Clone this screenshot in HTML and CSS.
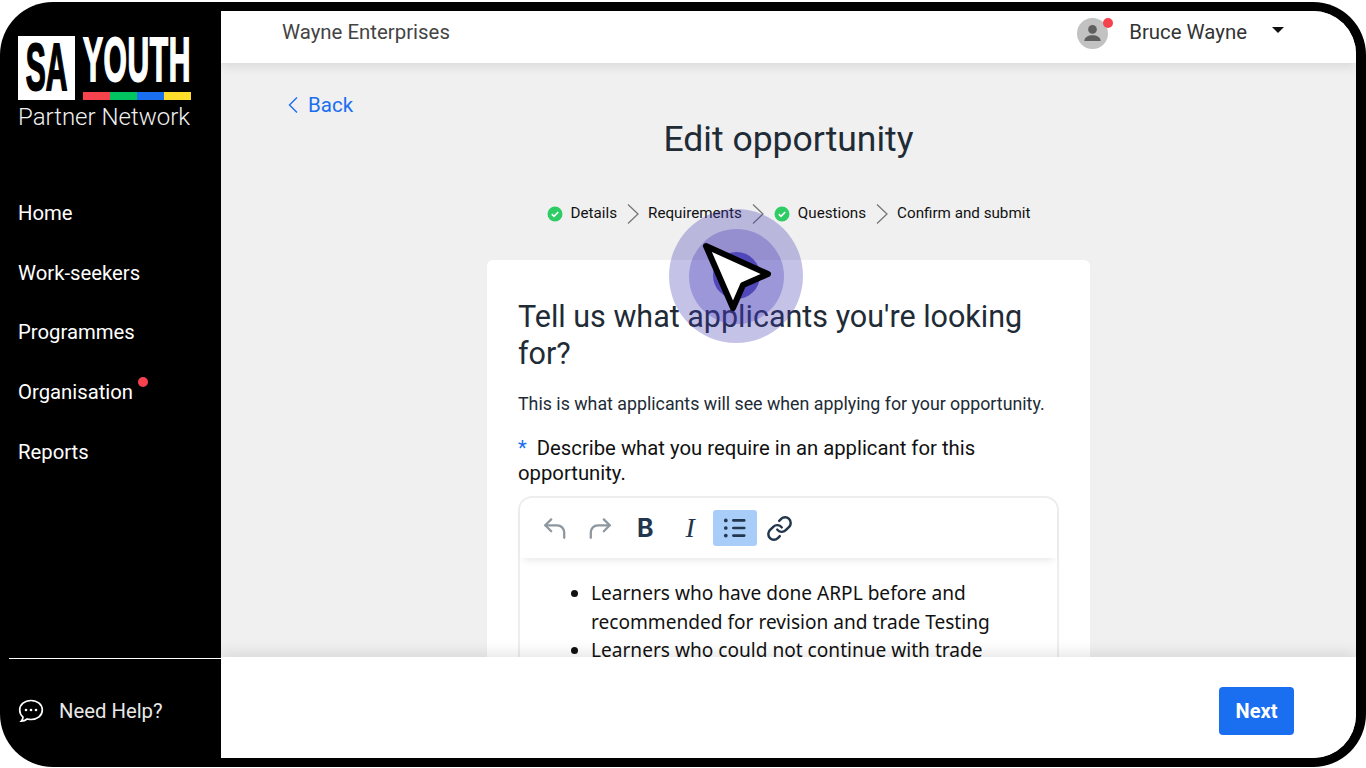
FILE: index.html
```html
<!DOCTYPE html>
<html lang="en">

<head>
    <meta charset="UTF-8">
    <meta name="viewport" content="width=device-width, initial-scale=1.0">
    <title>Edit opportunity</title>
    <link rel="stylesheet" href="styles.css">
</head>

<body>
    <div class="frame">
        <aside class="sidebar">
            <div class="logo">
                <div class="logo-top">
                    <div class="logo-sa"><span>SA</span></div>
                    <div class="logo-right">
                        <div class="logo-youth"><span>YOUTH</span></div>
                        <div class="logo-stripes">
                            <i class="red"></i><i class="green"></i><i class="blue"></i><i class="yellow"></i>
                        </div>
                    </div>
                </div>
                <div class="logo-sub">Partner Network</div>
            </div>
            <nav class="nav">
                <a>Home</a>
                <a>Work-seekers</a>
                <a>Programmes</a>
                <a>Organisation<b class="dot"></b></a>
                <a>Reports</a>
            </nav>
            <div class="help">
                <svg width="28" height="24" viewBox="0 0 26 24" fill="none" stroke="#fff" stroke-width="1.7">
                    <path d="M13 1.500c6.400 0 11.300 4 11.300 9.600s-4.900 9.400-11.300 9.400c-1.300 0-2.600-.2-3.800-.5-1.300 1.100-3.500 2.200-6 2.200 1-1.100 1.700-2.500 1.800-4.100C2.900 16.400 1.700 13.900 1.700 11.100 1.700 5.500 6.600 1.500 13 1.500z" />
                    <circle cx="8" cy="11" r="1.300" fill="#fff" stroke="none" />
                    <circle cx="13" cy="11" r="1.300" fill="#fff" stroke="none" />
                    <circle cx="18" cy="11" r="1.300" fill="#fff" stroke="none" />
                </svg>
                <span>Need Help?</span>
            </div>
        </aside>

        <div class="main">
            <header class="topbar">
                <div class="company">Wayne Enterprises</div>
                <div class="user">
                    <div class="avatar">
                        <svg width="21" height="21" viewBox="0 0 18 18" fill="#5f5f5f">
                            <circle cx="9" cy="5.500" r="3.700" />
                            <path d="M2 15.500c0-3.400 3.400-5 7-5s7 1.600 7 5z" />
                        </svg>
                        <b class="dot"></b>
                    </div>
                    <span class="user-name">Bruce Wayne</span>
                    <i class="caret"></i>
                </div>
            </header>

            <main class="content">
                <a class="back">
                    <svg width="12" height="18" viewBox="0 0 12 18" fill="none" stroke="#1a6ef0" stroke-width="1.400">
                        <path d="M10 1.500 2.500 9l7.500 7.500" />
                    </svg>
                    Back
                </a>
                <h1 class="title">Edit opportunity</h1>
                <div class="steps">
                    <svg class="check" width="16" height="16" viewBox="0 0 16 16">
                        <circle cx="8" cy="8" r="7.500" fill="#2ecc64" />
                        <path d="M4.800 8.200 7 10.300l4.200-4.300" fill="none" stroke="#fff" stroke-width="1.600" />
                    </svg>
                    <span class="step">Details</span>
                    <svg class="chev" width="14" height="22" viewBox="0 0 14 22" fill="none" stroke="#777" stroke-width="1.300">
                        <path d="M2 1.500 12 11 2 20.500" />
                    </svg>
                    <span class="step">Requirements</span>
                    <svg class="chev" width="14" height="22" viewBox="0 0 14 22" fill="none" stroke="#777" stroke-width="1.300">
                        <path d="M2 1.500 12 11 2 20.500" />
                    </svg>
                    <svg class="check" width="16" height="16" viewBox="0 0 16 16">
                        <circle cx="8" cy="8" r="7.500" fill="#2ecc64" />
                        <path d="M4.800 8.200 7 10.300l4.200-4.300" fill="none" stroke="#fff" stroke-width="1.600" />
                    </svg>
                    <span class="step">Questions</span>
                    <svg class="chev" width="14" height="22" viewBox="0 0 14 22" fill="none" stroke="#777" stroke-width="1.300">
                        <path d="M2 1.500 12 11 2 20.500" />
                    </svg>
                    <span class="step">Confirm and submit</span>
                </div>

                <section class="card">
                    <h2>Tell us what applicants you're looking for?</h2>
                    <p class="hint">This is what applicants will see when applying for your opportunity.</p>
                    <label class="field-label"><span class="star">*</span>Describe what you require in an applicant for this opportunity.</label>
                    <div class="editor">
                        <div class="toolbar">
                            <button class="tool">
                                <svg width="26" height="26" viewBox="0 0 24 24" fill="none" stroke="#8d979f" stroke-width="2.100" stroke-linecap="round" stroke-linejoin="round">
                                    <path d="M8.500 4 3 9.500 8.500 15" />
                                    <path d="M3 9.500h11a6.500 6.500 0 0 1 6.500 6.500v5" />
                                </svg>
                            </button>
                            <button class="tool">
                                <svg width="26" height="26" viewBox="0 0 24 24" fill="none" stroke="#8d979f" stroke-width="2.100" stroke-linecap="round" stroke-linejoin="round">
                                    <path d="M15.500 4 21 9.500 15.500 15" />
                                    <path d="M21 9.500H10A6.500 6.500 0 0 0 3.500 16v5" />
                                </svg>
                            </button>
                            <button class="tool tool-b">B</button>
                            <button class="tool tool-i">I</button>
                            <button class="tool active">
                                <svg width="26" height="26" viewBox="0 0 24 24" fill="none" stroke="#22364d" stroke-width="2.500" stroke-linecap="round">
                                    <path d="M10.500 5h10M10.500 12h10M10.500 19h10" />
                                    <circle cx="3.500" cy="5" r="1.700" fill="#22364d" stroke="none" />
                                    <circle cx="3.500" cy="12" r="1.700" fill="#22364d" stroke="none" />
                                    <circle cx="3.500" cy="19" r="1.700" fill="#22364d" stroke="none" />
                                </svg>
                            </button>
                            <button class="tool">
                                <svg width="27" height="27" viewBox="0 0 24 24" fill="none" stroke="#22364d" stroke-width="2.200" stroke-linecap="round" stroke-linejoin="round">
                                    <path d="M10 13a5 5 0 0 0 7.540.54l3-3a5 5 0 0 0-7.070-7.070l-1.720 1.710" />
                                    <path d="M14 11a5 5 0 0 0-7.540-.54l-3 3a5 5 0 0 0 7.070 7.070l1.710-1.710" />
                                </svg>
                            </button>
                        </div>
                        <ul class="editor-body">
                            <li>Learners who have done ARPL before and recommended for revision and trade Testing</li>
                            <li>Learners who could not continue with trade testing due to funding</li>
                        </ul>
                    </div>
                </section>
            </main>

            <footer class="footer">
                <button class="next">Next</button>
            </footer>
        </div>

        <div class="pointer">
            <span class="ring ring-3"></span>
            <span class="ring ring-2"></span>
            <span class="ring ring-1"></span>
            <svg class="arrow" width="74" height="74" viewBox="0 0 74 74">
                <path d="M6 6 68 34 43 45 33 68z" fill="#fff" stroke="#000" stroke-width="6" stroke-linejoin="round" />
            </svg>
        </div>
    </div>
</body>

</html>
```

FILE: styles.css
```css
* {
    box-sizing: border-box;
}

html, body {
    margin: 0;
    padding: 0;
    background-color: #fff;
}

body {
    width: 1366px;
    height: 768px;
    overflow: hidden;
    font-family: Roboto, Arial, sans-serif;
}

.frame {
    position: relative;
    display: flex;
    width: 1366px;
    height: 765px;
    margin-top: 2px;
    padding: 9px 10px 9px 0;
    background-color: #000;
    border-radius: 53px;
    overflow: hidden;
}

/* sidebar */
.sidebar {
    display: flex;
    flex-direction: column;
    flex: 0 0 221px;
    margin-top: -9px;
    margin-bottom: -9px;
    color: #fff;
}

.logo {
    width: 172px;
    margin: 34px 0 0 18px;
}

.logo-top {
    display: flex;
    height: 64px;
}

.logo-sa {
    flex: 0 0 57px;
    height: 64px;
    background-color: #fff;
    color: #000;
    text-align: center;
}

.logo-sa span,
.logo-youth span {
    display: inline-block;
    font-family: "Liberation Sans", Arial, sans-serif;
    font-weight: 700;
    font-size: 30px;
    -webkit-text-stroke: 0.9px currentColor;
}

.logo-sa span {
    line-height: 64px;
    transform: scaleY(2.2);
}

.logo-right {
    flex: 0 0 107px;
    margin-left: 8px;
}

.logo-youth {
    height: 52px;
    white-space: nowrap;
}

.logo-youth span {
    letter-spacing: 0.6px;
    line-height: 48px;
    color: #fff;
    transform: scaleY(2.1);
}

.logo-stripes {
    display: flex;
    height: 8px;
    margin-top: 4px;
}

.logo-stripes i {
    flex: 1;
}

.red { background-color: #f5424c; }
.green { background-color: #00c45f; }
.blue { background-color: #1a6ef0; }
.yellow { background-color: #ffdd2b; }

.logo-sub {
    margin-top: 3px;
    font-size: 24px;
    font-weight: 300;
    line-height: 28px;
    white-space: nowrap;
    color: #f0f0f0;
}

.nav {
    display: flex;
    flex-direction: column;
    margin-top: 62px;
    padding-left: 18px;
}

.nav a {
    height: 59.700px;
    font-size: 20.300px;
    line-height: 40px;
}

.dot {
    display: inline-block;
    width: 10px;
    height: 10px;
    border-radius: 50%;
    background-color: #f5424c;
}

.nav .dot {
    position: relative;
    top: -12px;
    margin-left: 5px;
}

.help {
    display: flex;
    align-items: center;
    gap: 14px;
    margin: auto 0 0 9px;
    height: 109px;
    padding: 0 0 5px 8px;
    border-top: 1px solid #fff;
    font-size: 20.300px;
    color: #e8e8e8;
}

/* main column */
.main {
    display: flex;
    flex-direction: column;
    flex: 1;
    min-width: 0;
    background-color: #f0f0f0;
    border-radius: 0 43px 43px 0;
    overflow: hidden;
}

.topbar {
    display: flex;
    align-items: center;
    justify-content: space-between;
    flex: 0 0 52px;
    padding: 0 72px 10px 61px;
    background-color: #fff;
    box-shadow: 0 2px 12px rgba(0, 0, 0, 0.12);
    font-size: 20.400px;
    color: #444;
}

.user {
    display: flex;
    align-items: center;
}

.avatar {
    position: relative;
    display: flex;
    align-items: center;
    justify-content: center;
    width: 31px;
    height: 31px;
    margin-top: 2px;
    border-radius: 50%;
    background-color: #c2c2c2;
}

.avatar .dot {
    position: absolute;
    top: 0;
    right: -5px;
}

.user-name {
    margin-left: 21px;
    color: #333;
}

.caret {
    width: 0;
    height: 0;
    margin: -4px 0 0 25px;
    border-left: 6px solid transparent;
    border-right: 6px solid transparent;
    border-top: 6px solid #111;
}

.content {
    position: relative;
    flex: 1;
    min-height: 0;
    overflow: hidden;
    display: flex;
    flex-direction: column;
    align-items: center;
}

.back {
    align-self: flex-start;
    display: flex;
    align-items: center;
    gap: 9px;
    margin: 30px 0 0 66px;
    font-size: 20.500px;
    line-height: 24px;
    color: #1a6ef0;
}

.title {
    margin: -1px 0 0;
    font-size: 35.500px;
    font-weight: 400;
    line-height: 46px;
    color: #212b36;
}

.steps {
    display: flex;
    align-items: center;
    margin-top: 39px;
    font-size: 15.200px;
    color: #111;
}

.check {
    margin: 2px 8px 0 0;
}

.chev {
    margin: 2px 8px 0 9px;
}

.chev + .check {
    margin-left: 1px;
}

.card {
    width: 603px;
    flex: none;
    margin-top: 35px;
    padding: 38px 31px 0;
    background-color: #fff;
    border-radius: 6px;
    color: #212b36;
}

.card h2 {
    margin: 0;
    font-size: 30.500px;
    font-weight: 400;
    line-height: 37px;
}

.hint {
    margin: 20px 0 0;
    font-size: 17.800px;
    line-height: 24px;
}

.field-label {
    display: block;
    margin-top: 20px;
    font-size: 20.300px;
    line-height: 25px;
    color: #111;
}

.star {
    margin-right: 10px;
    color: #1a6ef0;
}

.editor {
    margin-top: 10px;
    border: 2px solid #eee;
    border-radius: 14px 14px 0 0;
}

.toolbar {
    display: flex;
    align-items: center;
    height: 60px;
    padding: 0 12px 0 13px;
    box-shadow: 0 6px 8px -4px rgba(0, 0, 0, 0.1);
}

.tool {
    display: flex;
    align-items: center;
    justify-content: center;
    width: 44.900px;
    height: 36px;
    margin: 0;
    padding: 0;
    border: 0;
    border-radius: 3px;
    background: none;
    color: #22364d;
}

.tool-b {
    font-family: Inter, Arial, sans-serif;
    font-size: 25px;
    font-weight: 700;
}

.tool-i {
    font-family: "Liberation Serif", serif;
    font-size: 28px;
    font-style: italic;
}

.active {
    background-color: #a8cdf9;
}

.editor-body {
    margin: 0;
    padding: 21px 30px 0 71px;
    font-family: "Noto Sans", Arial, sans-serif;
    font-size: 19.100px;
    line-height: 28.500px;
    color: #111;
}

/* bottom bar */
.footer {
    display: flex;
    align-items: center;
    justify-content: flex-end;
    flex: 0 0 101px;
    position: relative;
    padding: 7px 62px 0 0;
    background-color: #fff;
    box-shadow: 0 -4px 14px rgba(0, 0, 0, 0.1);
}

.next {
    width: 75px;
    height: 48px;
    border: 0;
    border-radius: 4px;
    background-color: #1a6ef0;
    color: #fff;
    font-family: Roboto, Arial, sans-serif;
    font-size: 20px;
    font-weight: 700;
}

/* cursor highlight over the page */
.pointer {
    position: absolute;
    left: 669px;
    top: 207px;
    width: 134px;
    height: 134px;
}

.ring {
    position: absolute;
    border-radius: 50%;
    background-color: rgba(63, 52, 179, 0.3);
}

.ring-3 {
    left: 0;
    top: 0;
    width: 134px;
    height: 134px;
}

.ring-2 {
    left: 20px;
    top: 20px;
    width: 95px;
    height: 95px;
}

.ring-1 {
    left: 44px;
    top: 43px;
    width: 47px;
    height: 47px;
    background-color: rgba(63, 52, 179, 0.8);
}

.arrow {
    position: absolute;
    left: 31px;
    top: 31px;
}
```
